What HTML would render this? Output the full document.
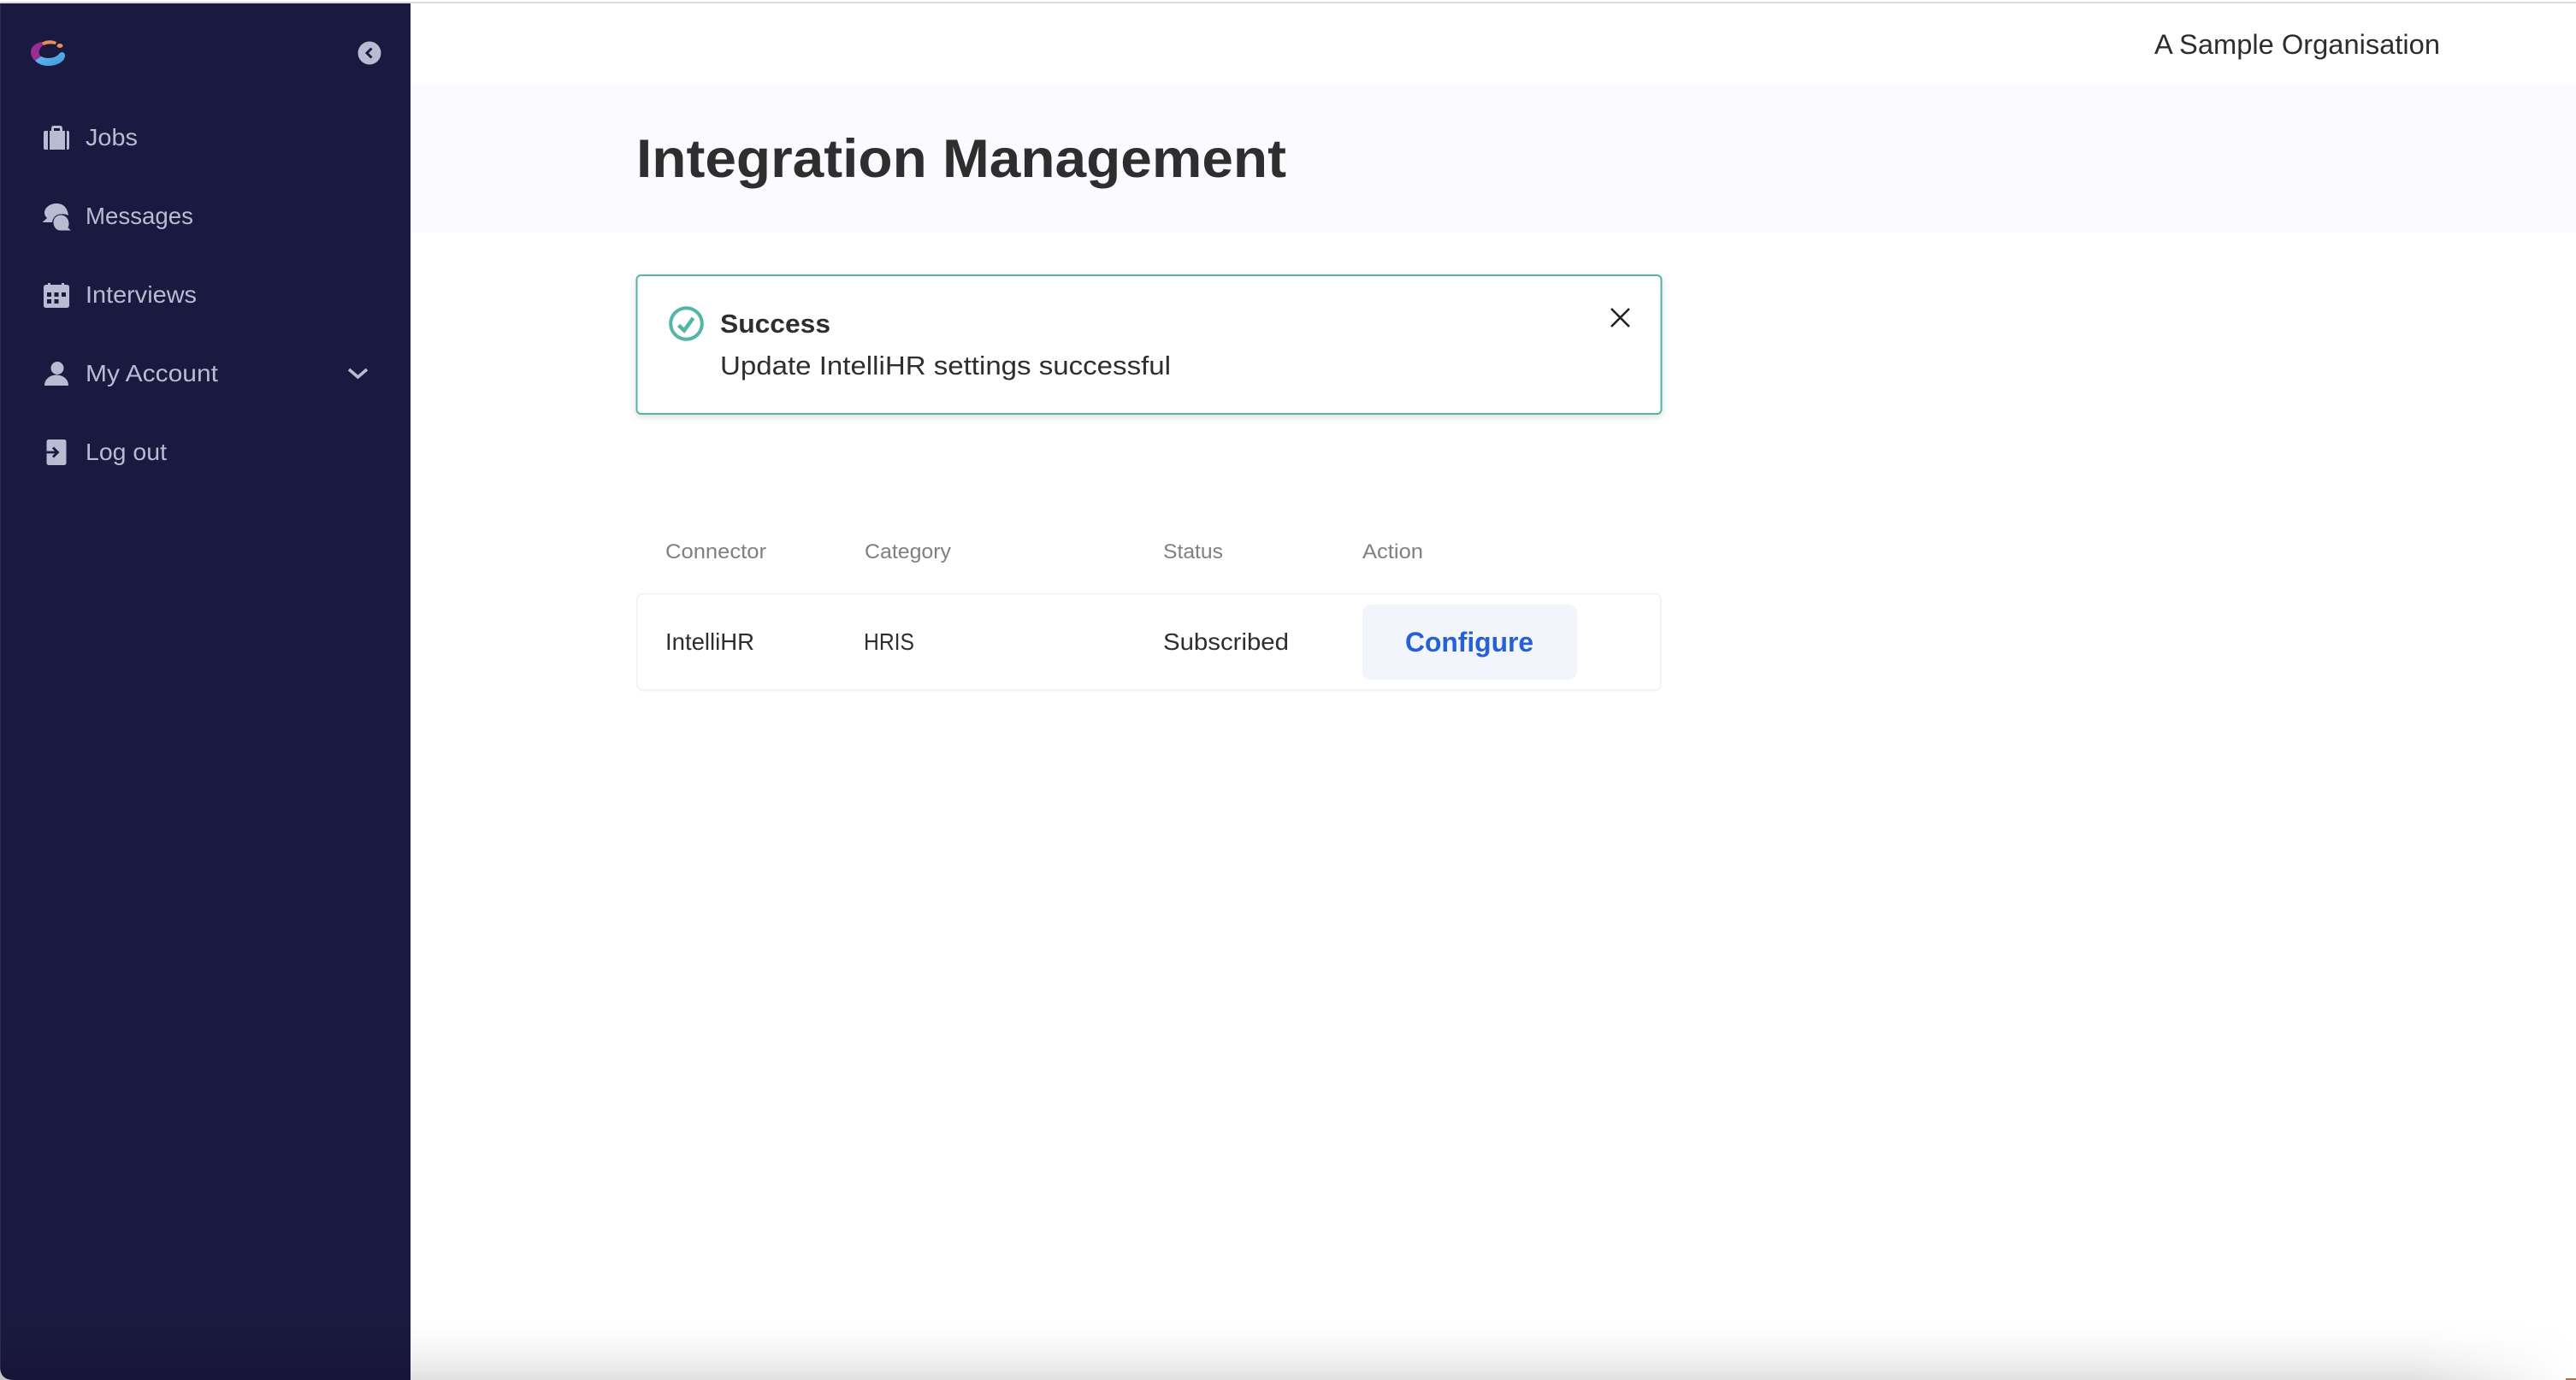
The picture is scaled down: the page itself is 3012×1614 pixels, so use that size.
<!DOCTYPE html>
<html><head><meta charset="utf-8"><title>Integration Management</title>
<style>
html,body{margin:0;padding:0;width:3012px;height:1614px;overflow:hidden;background:#fff}
svg{position:absolute;left:0;top:0;display:block}
text{font-family:"Liberation Sans",sans-serif;white-space:pre}
</style></head><body>
<svg width="3012" height="1614" viewBox="0 0 3012 1614" xmlns="http://www.w3.org/2000/svg">
<defs>
<linearGradient id="sh" x1="0" y1="0" x2="0" y2="1"><stop offset="0" stop-color="#fff"/><stop offset=".3" stop-color="#fbfbfb"/><stop offset=".7" stop-color="#efefef"/><stop offset="1" stop-color="#e0e0e0"/></linearGradient>
<linearGradient id="fade" x1="0" y1="0" x2="1" y2="0"><stop offset="0" stop-color="#fff" stop-opacity="0"/><stop offset="1" stop-color="#fff"/></linearGradient>
<linearGradient id="side" x1="0" y1="0" x2="0" y2="1"><stop offset="0" stop-color="#1a1a40"/><stop offset=".95" stop-color="#1a1a40"/><stop offset="1" stop-color="#171539"/></linearGradient>
<linearGradient id="bl" x1="0" y1="0" x2="1" y2="1"><stop offset="0" stop-color="#62c2f6"/><stop offset="1" stop-color="#4296dc"/></linearGradient>
<filter id="ds" x="-5%" y="-20%" width="110%" height="140%"><feDropShadow dx="0" dy="3" stdDeviation="4" flood-color="#000" flood-opacity=".13"/></filter>
</defs>
<rect width="3012" height="1614" fill="#fff"/>
<rect y="2" width="3012" height="2" fill="#dddddd"/>
<!-- bottom shadow -->
<rect x="480" y="1545" width="2532" height="69" fill="url(#sh)"/>
<rect x="2820" y="1545" width="192" height="69" fill="url(#fade)"/>
<rect x="3000" y="1612" width="12" height="2" fill="#a8744a"/>
<!-- header band -->
<rect x="480" y="100" width="2532" height="172" fill="#fafaff"/>
<!-- sidebar -->
<rect x="0" y="1590" width="30" height="24" fill="#c4c4c4"/>
<path d="M0 4H480V1614H16Q0 1614 0 1598Z" fill="url(#side)"/>
<rect x="0" y="4" width="1" height="1596" fill="#2c2c50"/>
<!-- logo -->
<path d="M50 49C41 50 36 55 36 61C36 65 38 69 41 71L48 66C46 64 45 62 46 59C47 56 49 53 52 52Z" fill="#9a2c96"/>
<path d="M41 71C45 75 50 77 56 77C67 77 76 72 76 65C76 63 75 62 73 61C71 61 70 62 69 63C67 66 62 68 56 68C53 68 50 67 48 66Z" fill="url(#bl)"/>
<path d="M49 50C53 47 60 46 66 49L65 52C60 51 55 51 51 53Z" fill="#e88c58"/>
<ellipse cx="70" cy="53.500" rx="3.500" ry="2.500" fill="#e88c58"/>
<!-- collapse -->
<circle cx="432" cy="62" r="13.500" fill="#b9bbd3"/>
<path d="M434.500 56.500L429 62L434.500 67.500" fill="none" stroke="#1a1a40" stroke-width="3"/>
<!-- icons -->
<g fill="#b9bbd3">
<path d="M53 153H56V175H53Q51 175 51 173V155Q51 153 53 153ZM58 153H76V175H58ZM78 153H79Q81 153 81 155V173Q81 175 79 175H78Z"/>
<path fill-rule="evenodd" d="M60 153V150Q60 147 63 147H70Q73 147 73 150V153H70V150H63V153Z"/>
<path d="M66 238C74 238 79 243 80 252C72 248 62 252 61 260H49.500L55 255C52 252 52 250 52 248C53 242 59 238 66 238Z"/>
<path d="M71 251C78 251 81 257 81 262C81 264 81 265 80 266L84 270H71C65 270 62 265 62 260C62 255 66 251 71 251Z" stroke="#1a1a40" stroke-width="1"/>
<path fill-rule="evenodd" d="M56 331H59V333H72V331H75V333H78Q81 333 81 336V357Q81 360 78 360H54Q51 360 51 357V336Q51 333 54 333H56ZM55 342V347H60V342ZM63.500 342V347H68.500V342ZM72 342V347H77V342ZM55 350V355H60V350ZM63.500 350V355H68.500V350Z"/>
<circle cx="67" cy="430.500" r="7.500"/>
<path d="M52 451C52 443 59 438.500 66 438.500C73 438.500 80 443 80 451Z"/>
<rect x="54.500" y="514" width="23" height="30" rx="2.500"/>
</g>
<path d="M54 529H67M62 523.500L67.500 529L62 534.500" fill="none" stroke="#1a1a40" stroke-width="2.800"/>
<path d="M408 432L418.500 441L429 432" fill="none" stroke="#b9bbd3" stroke-width="3.600"/>
<!-- sidebar text -->
<g fill="#b9bbd3" font-size="28">
<text x="100" y="170" textLength="61" lengthAdjust="spacingAndGlyphs">Jobs</text>
<text x="100" y="262" textLength="126" lengthAdjust="spacingAndGlyphs">Messages</text>
<text x="100" y="354" textLength="130" lengthAdjust="spacingAndGlyphs">Interviews</text>
<text x="100" y="446" textLength="155" lengthAdjust="spacingAndGlyphs">My Account</text>
<text x="100" y="538" textLength="95" lengthAdjust="spacingAndGlyphs">Log out</text>
</g>
<text x="2519" y="63" font-size="32" fill="#2e2e2e" textLength="334" lengthAdjust="spacingAndGlyphs">A Sample Organisation</text>
<text x="744" y="207" font-size="63" font-weight="700" fill="#2e2e2e" textLength="760" lengthAdjust="spacingAndGlyphs">Integration Management</text>
<!-- alert -->
<rect x="744.500" y="322" width="1198" height="162" rx="5" fill="#fff" stroke="#52b5a5" stroke-width="2" filter="url(#ds)"/>
<circle cx="802.500" cy="378.500" r="18.300" fill="none" stroke="#52b5a5" stroke-width="4"/>
<path d="M793.500 380.500L800 386.500L810.500 372" fill="none" stroke="#52b5a5" stroke-width="4.500"/>
<text x="842" y="389" font-size="31" font-weight="700" fill="#2e2e2e" textLength="129" lengthAdjust="spacingAndGlyphs">Success</text>
<text x="842" y="438" font-size="31" fill="#2e2e2e" textLength="527" lengthAdjust="spacingAndGlyphs">Update IntelliHR settings successful</text>
<path d="M1884 361L1905 382M1905 361L1884 382" fill="none" stroke="#222" stroke-width="2.600"/>
<!-- table -->
<g fill="#808080" font-size="24">
<text x="778" y="653" textLength="118" lengthAdjust="spacingAndGlyphs">Connector</text>
<text x="1011" y="653" textLength="101" lengthAdjust="spacingAndGlyphs">Category</text>
<text x="1360" y="653" textLength="70" lengthAdjust="spacingAndGlyphs">Status</text>
<text x="1593" y="653" textLength="71" lengthAdjust="spacingAndGlyphs">Action</text>
</g>
<rect x="745" y="694.500" width="1197" height="113" rx="7" fill="#fff" stroke="#f3f3f5" stroke-width="2"/>
<g fill="#2e2e2e" font-size="28">
<text x="778" y="760" textLength="104" lengthAdjust="spacingAndGlyphs">IntelliHR</text>
<text x="1010" y="760" textLength="59" lengthAdjust="spacingAndGlyphs">HRIS</text>
<text x="1360" y="760" textLength="147" lengthAdjust="spacingAndGlyphs">Subscribed</text>
</g>
<rect x="1593" y="707" width="251" height="88" rx="10" fill="#f2f5fb"/>
<text x="1643" y="762" font-size="32" font-weight="700" fill="#2560d6" textLength="150" lengthAdjust="spacingAndGlyphs">Configure</text>
</svg>
</body></html>
